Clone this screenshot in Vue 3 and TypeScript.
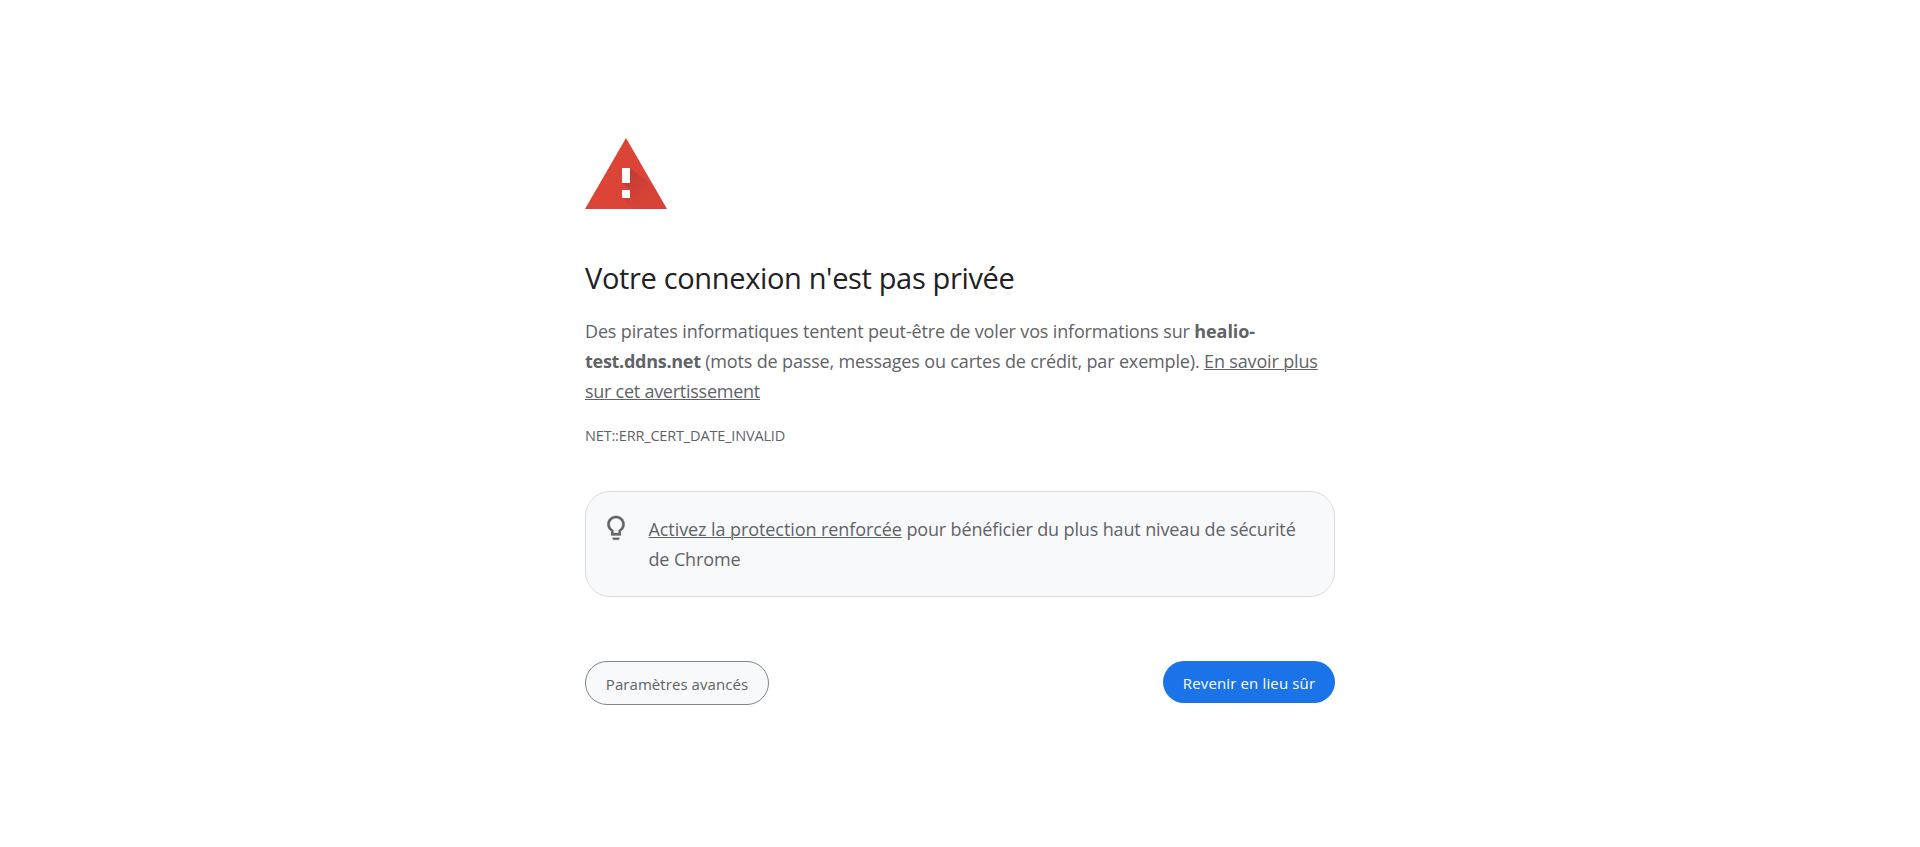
<script setup lang="ts">
const host = ['healio-', 'test.ddns.net']
const errorCode = 'NET::ERR_CERT_DATE_INVALID'
</script>

<template>
  <main class="interstitial">
    <svg class="warning" viewBox="0 0 82 71" aria-hidden="true">
      <defs>
        <linearGradient id="shade" x1="42" y1="40" x2="62" y2="62" gradientUnits="userSpaceOnUse">
          <stop offset="0" stop-color="#b53730" stop-opacity="0.6" />
          <stop offset="1" stop-color="#c83b32" stop-opacity="0.15" />
        </linearGradient>
      </defs>
      <path d="M41 0 82 71H0Z" fill="#db4437" />
      <path d="M45 30 69.5 49.5 82 71H48L37 60 45 52 37 45Z" fill="url(#shade)" />
      <path d="M37 30h8v15h-8zM37 52h8v8h-8z" fill="#fff" />
    </svg>

    <h1>Votre connexion n'est pas privée</h1>

    <p class="body">
      <span>Des pirates informatiques tentent peut-être de voler vos informations sur </span><strong>{{ host[0] }}</strong><br />
      <strong class="domain">{{ host[1] }}</strong><span> (mots de passe, messages ou cartes de crédit, par exemple). </span><a>En savoir plus</a><br />
      <a class="link-end">sur cet avertissement</a>
    </p>

    <div class="code">{{ errorCode }}</div>

    <section class="tip">
      <svg class="bulb" viewBox="0 0 24 24" aria-hidden="true">
        <path d="M9.3 19.8h5.4v.7c0 .5-.4.9-.9.9h-3.6c-.5 0-.9-.4-.9-.9zM12 2.2c-3.86 0-7 3.05-7 6.8 0 2.38 1.19 4.3 3.1 5.6V18h7.8v-3.4C17.81 13.3 19 11.38 19 9c0-3.75-3.14-6.8-7-6.8zm2.85 10.9-.85.6V16h-4v-2.3l-.85-.6A4.997 4.997 0 0 1 7 9c0-2.7 2.24-4.9 5-4.9S17 6.3 17 9c0 1.63-.8 3.16-2.15 4.1z" />
      </svg>
      <p>
        <a>Activez la protection renforcée</a><span> pour bénéficier du plus haut niveau de sécurité</span><br />
        <span>de Chrome</span>
      </p>
    </section>

    <nav class="actions">
      <button class="secondary" type="button">Paramètres avancés</button>
      <button class="primary" type="button">Revenir en lieu sûr</button>
    </nav>
  </main>
</template>

<style>
body {
  background: #fff;
}
</style>

<style scoped>
.interstitial {
  box-sizing: border-box;
  width: 750px;
  margin: 0 auto;
  padding-top: 138px;
  color: #5f6368;
  font-family: "Segoe UI", "Open Sans", "Noto Sans", sans-serif;
  font-size: 18px;
  line-height: 30px;
  white-space: nowrap;
}
.warning {
  display: block;
  width: 82px;
  height: 71px;
}
h1 {
  margin: 50px 0 0;
  color: #202124;
  font-size: 29px;
  font-weight: 400;
  line-height: 38px;
  letter-spacing: -0.345px;
}
.body {
  margin: 19px 0 0;
  letter-spacing: -0.155px;
}
strong {
  font-weight: 700;
  letter-spacing: -0.1px;
}
.domain {
  letter-spacing: -0.28px;
}
a {
  text-decoration: underline;
  text-decoration-thickness: 1px;
  text-underline-offset: 1px;
}
.link-end {
  letter-spacing: -0.26px;
}
.code {
  margin-top: 18px;
  font-size: 14.5px;
  line-height: 24px;
  letter-spacing: -0.165px;
}
.tip {
  box-sizing: border-box;
  display: flex;
  height: 106px;
  margin-top: 43px;
  padding: 21px 15px;
  border: 1px solid #dadce0;
  border-radius: 25px;
  background: #f8f9fa;
}
.tip p {
  margin: 1px 0 0 17.5px;
  letter-spacing: -0.14px;
}
.tip a {
  letter-spacing: -0.08px;
}
.bulb {
  flex: none;
  width: 30px;
  height: 30px;
  fill: #666;
  stroke: #666;
  stroke-width: 0.2;
}
.actions {
  display: flex;
  justify-content: space-between;
  align-items: flex-start;
  margin-top: 64px;
}
button {
  box-sizing: border-box;
  display: flex;
  justify-content: center;
  padding: 0;
  border: 0;
  font: inherit;
  font-size: 15px;
}
.secondary {
  width: 184px;
  height: 44px;
  padding-top: 7px;
  border: 1px solid #80868b;
  border-radius: 22px;
  background: #f8f9fa;
  color: #5f6368;
  letter-spacing: 0.06px;
}
.primary {
  width: 172px;
  height: 42px;
  padding-top: 7px;
  border-radius: 21px;
  background: #1a73e8;
  color: #fff;
  letter-spacing: 0.14px;
}
</style>
